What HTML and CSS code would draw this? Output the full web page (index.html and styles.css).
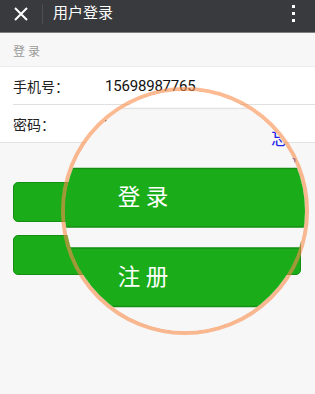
FILE: index.html
```html
<!DOCTYPE html>
<html lang="zh-CN">
<head>
<meta charset="utf-8">
<title>用户登录</title>
<link rel="stylesheet" href="styles.css">
</head>
<body>
<div class="screen">
  <div class="page">
    <header class="topbar">
      <svg class="close" width="14" height="14" viewBox="0 0 14 14"><path d="M1 1L13 13M13 1L1 13" stroke="#fff" stroke-width="2" fill="none"/></svg>
      <span class="divider"></span>
      <span class="title">用户登录</span>
      <span class="more"><i></i><i></i><i></i></span>
    </header>
    <div class="section-label">登 录</div>
    <div class="form">
      <div class="row"><span class="label">手机号：</span><span class="value">15698987765</span></div>
      <div class="row"><span class="label">密码：</span><span class="value"><i class="dot"></i></span></div>
    </div>
    <div class="forgot"><a>忘记密码?</a></div>
    <div class="actions">
      <button class="btn">登 录</button>
      <button class="btn">注 册</button>
    </div>
  </div>

  <div class="lens" aria-hidden="true">
    <div class="lens-view">
      <div class="page">
        <header class="topbar">
          <svg class="close" width="14" height="14" viewBox="0 0 14 14"><path d="M1 1L13 13M13 1L1 13" stroke="#fff" stroke-width="2" fill="none"/></svg>
          <span class="divider"></span>
          <span class="title">用户登录</span>
          <span class="more"><i></i><i></i><i></i></span>
        </header>
        <div class="section-label">登 录</div>
        <div class="form">
          <div class="row"><span class="label">手机号：</span><span class="value">15698987765</span></div>
          <div class="row"><span class="label">密码：</span><span class="value"><i class="dot"></i></span></div>
        </div>
        <div class="forgot"><a>忘记密码?</a></div>
        <div class="actions">
          <button class="btn">登 录</button>
          <button class="btn">注 册</button>
        </div>
      </div>
    </div>
  </div>
</div>
</body>
</html>
```

FILE: styles.css
```css
* { box-sizing: border-box; }
html, body { margin: 0; padding: 0; }
body {
  width: 315px;
  height: 394px;
  overflow: hidden;
  background: #f7f7f7;
  font-family: Roboto, "Noto Sans CJK SC", sans-serif;
}
.screen { position: relative; width: 315px; height: 394px; overflow: hidden; }
.page { width: 315px; height: 394px; background: #f7f7f7; }

.topbar {
  display: flex;
  align-items: center;
  height: 33px;
  padding-bottom: 5px;
  background: #393a3e;
  border-bottom: 1px solid #7e7e80;
  color: #fff;
}
.close { display: block; margin-left: 14px; flex: none; }
.divider { width: 1px; height: 20px; background: #4d4e52; margin-left: 14px; }
.title { margin-left: 10px; font-size: 15px; line-height: 1; }
.more { margin-left: auto; margin-right: 20px; display: flex; flex-direction: column; gap: 3.6px; }
.more i { display: block; width: 3px; height: 3px; background: #fff; }

.section-label {
  padding: 11px 13px 6px;
  font-size: 12px;
  line-height: 16px;
  color: #9a9a9a;
}

.form {
  background: #fff;
  border-top: 1px solid #ececec;
  border-bottom: 1px solid #e3e3e3;
}
.row { display: flex; align-items: center; height: 37px; margin-left: 13px; }
.row + .row { height: 38px; border-top: 1px solid #e0e0e0; }
.label {
  width: 92px;
  flex: none;
  font-family: "Noto Sans CJK TC", sans-serif;
  font-size: 14px;
  color: #222;
}
.value { display: flex; align-items: center; font-size: 15px; letter-spacing: -0.2px; color: #111; }
.dot { display: block; width: 2px; height: 2px; background: #555; margin-bottom: 5px; }

.forgot {
  margin-top: 13px;
  height: 14px;
  padding-right: 19px;
  text-align: right;
  font-size: 12px;
  line-height: 14px;
}
.forgot a { color: #2020e6; }

.actions {
  display: flex;
  flex-direction: column;
  gap: 13px;
  padding: 12px 14px 0 13px;
}
.btn {
  height: 40px;
  padding: 0 0 3px;
  border: 1px solid #148f13;
  border-radius: 5px;
  background: #1aad19;
  color: #fff;
  font-family: Roboto, "Noto Sans CJK SC", sans-serif;
  font-size: 15px;
}

.lens {
  position: absolute;
  left: 61px;
  top: 87px;
  width: 248px;
  height: 248px;
  border-radius: 50%;
  border: 4px solid rgba(250, 140, 75, 0.6);
  overflow: hidden;
}
.lens-view {
  position: absolute;
  left: -65px;
  top: -91px;
  width: 315px;
  height: 394px;
  transform: scale(1.5);
  transform-origin: 185px 210.6px;
}
```
